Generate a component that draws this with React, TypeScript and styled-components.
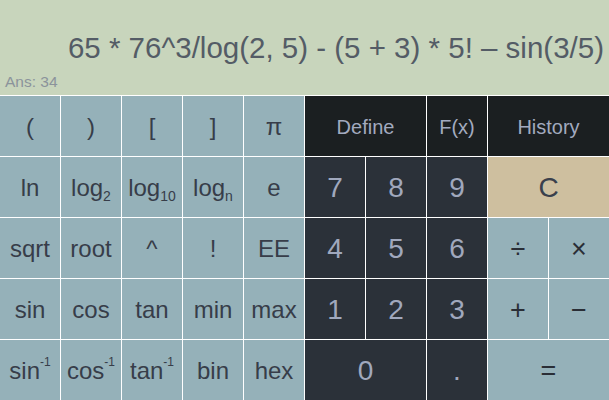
import React from 'react'
import styled, { createGlobalStyle } from 'styled-components'

type Variant = 'fn' | 'head' | 'num' | 'clear' | 'op'

type IKey = {
  label: React.ReactNode
  variant: Variant
  span?: number
}

const GlobalStyle = createGlobalStyle`
  html, body {
    margin: 0;
    padding: 0;
    overflow: hidden;
    background: #ffffff;
  }
  * {
    box-sizing: border-box;
  }
`

const Calculator = styled.div`
  width: 609px;
  height: 400px;
  display: flex;
  flex-direction: column;
  font-family: 'Liberation Sans', Arial, sans-serif;
  background: #ffffff;
`

const Display = styled.div`
  height: 95px;
  flex: 0 0 95px;
  background: #c8d5bc;
  display: flex;
  flex-direction: column;
  padding: 31px 5px 0 5px;
  overflow: hidden;
`

const Expression = styled.div`
  font-size: 29.5px;
  line-height: 34px;
  color: #545c66;
  text-align: right;
  white-space: nowrap;
`

const Answer = styled.div`
  margin-top: 8px;
  font-size: 15.5px;
  line-height: 18px;
  color: #8b939b;
`

const Keypad = styled.div`
  margin-top: 1px;
  display: grid;
  grid-template-columns: repeat(10, 60px);
  grid-template-rows: repeat(5, 60px);
  gap: 1px;
  background: #ffffff;
`

const palette: Record<Variant, { bg: string; fg: string; size: number }> = {
  fn: { bg: '#95b1b9', fg: '#373d49', size: 24 },
  head: { bg: '#1b1f21', fg: '#a2aabf', size: 20 },
  num: { bg: '#2b3139', fg: '#a0a8bd', size: 28 },
  clear: { bg: '#cebf9f', fg: '#3a404c', size: 28 },
  op: { bg: '#95b1b9', fg: '#2a2e36', size: 27 },
}

const Key = styled.div<{ $variant: Variant; $span: number }>`
  grid-column: span ${({ $span }) => $span};
  display: flex;
  align-items: center;
  justify-content: center;
  background: ${({ $variant }) => palette[$variant].bg};
  color: ${({ $variant }) => palette[$variant].fg};
  font-size: ${({ $variant }) => palette[$variant].size}px;
  line-height: 1;
  white-space: nowrap;
  user-select: none;
  padding-top: 2px;
`

const Sub = styled.span`
  font-size: 14px;
  position: relative;
  top: 8px;
`

const Sup = styled.span`
  font-size: 12px;
  position: relative;
  top: -9px;
`

const log = (base: string) => (
  <>
    log<Sub>{base}</Sub>
  </>
)

const inv = (name: string) => (
  <>
    {name}
    <Sup>-1</Sup>
  </>
)

const keys: IKey[] = [
  { label: '(', variant: 'fn' },
  { label: ')', variant: 'fn' },
  { label: '[', variant: 'fn' },
  { label: ']', variant: 'fn' },
  { label: 'π', variant: 'fn' },
  { label: 'Define', variant: 'head', span: 2 },
  { label: 'F(x)', variant: 'head' },
  { label: 'History', variant: 'head', span: 2 },

  { label: 'ln', variant: 'fn' },
  { label: log('2'), variant: 'fn' },
  { label: log('10'), variant: 'fn' },
  { label: log('n'), variant: 'fn' },
  { label: 'e', variant: 'fn' },
  { label: '7', variant: 'num' },
  { label: '8', variant: 'num' },
  { label: '9', variant: 'num' },
  { label: 'C', variant: 'clear', span: 2 },

  { label: 'sqrt', variant: 'fn' },
  { label: 'root', variant: 'fn' },
  { label: '^', variant: 'fn' },
  { label: '!', variant: 'fn' },
  { label: 'EE', variant: 'fn' },
  { label: '4', variant: 'num' },
  { label: '5', variant: 'num' },
  { label: '6', variant: 'num' },
  { label: '÷', variant: 'op' },
  { label: '×', variant: 'op' },

  { label: 'sin', variant: 'fn' },
  { label: 'cos', variant: 'fn' },
  { label: 'tan', variant: 'fn' },
  { label: 'min', variant: 'fn' },
  { label: 'max', variant: 'fn' },
  { label: '1', variant: 'num' },
  { label: '2', variant: 'num' },
  { label: '3', variant: 'num' },
  { label: '+', variant: 'op' },
  { label: '−', variant: 'op' },

  { label: inv('sin'), variant: 'fn' },
  { label: inv('cos'), variant: 'fn' },
  { label: inv('tan'), variant: 'fn' },
  { label: 'bin', variant: 'fn' },
  { label: 'hex', variant: 'fn' },
  { label: '0', variant: 'num', span: 2 },
  { label: '.', variant: 'num' },
  { label: '=', variant: 'op', span: 2 },
]

const App = () => {
  return (
    <>
      <GlobalStyle />
      <Calculator>
        <Display>
          <Expression>65 * 76^3/log(2, 5) - (5 + 3) * 5! – sin(3/5)</Expression>
          <Answer>Ans: 34</Answer>
        </Display>
        <Keypad>
          {keys.map((k, index) => (
            <Key key={index} $variant={k.variant} $span={k.span ?? 1}>
              {k.label}
            </Key>
          ))}
        </Keypad>
      </Calculator>
    </>
  )
}

export default App
